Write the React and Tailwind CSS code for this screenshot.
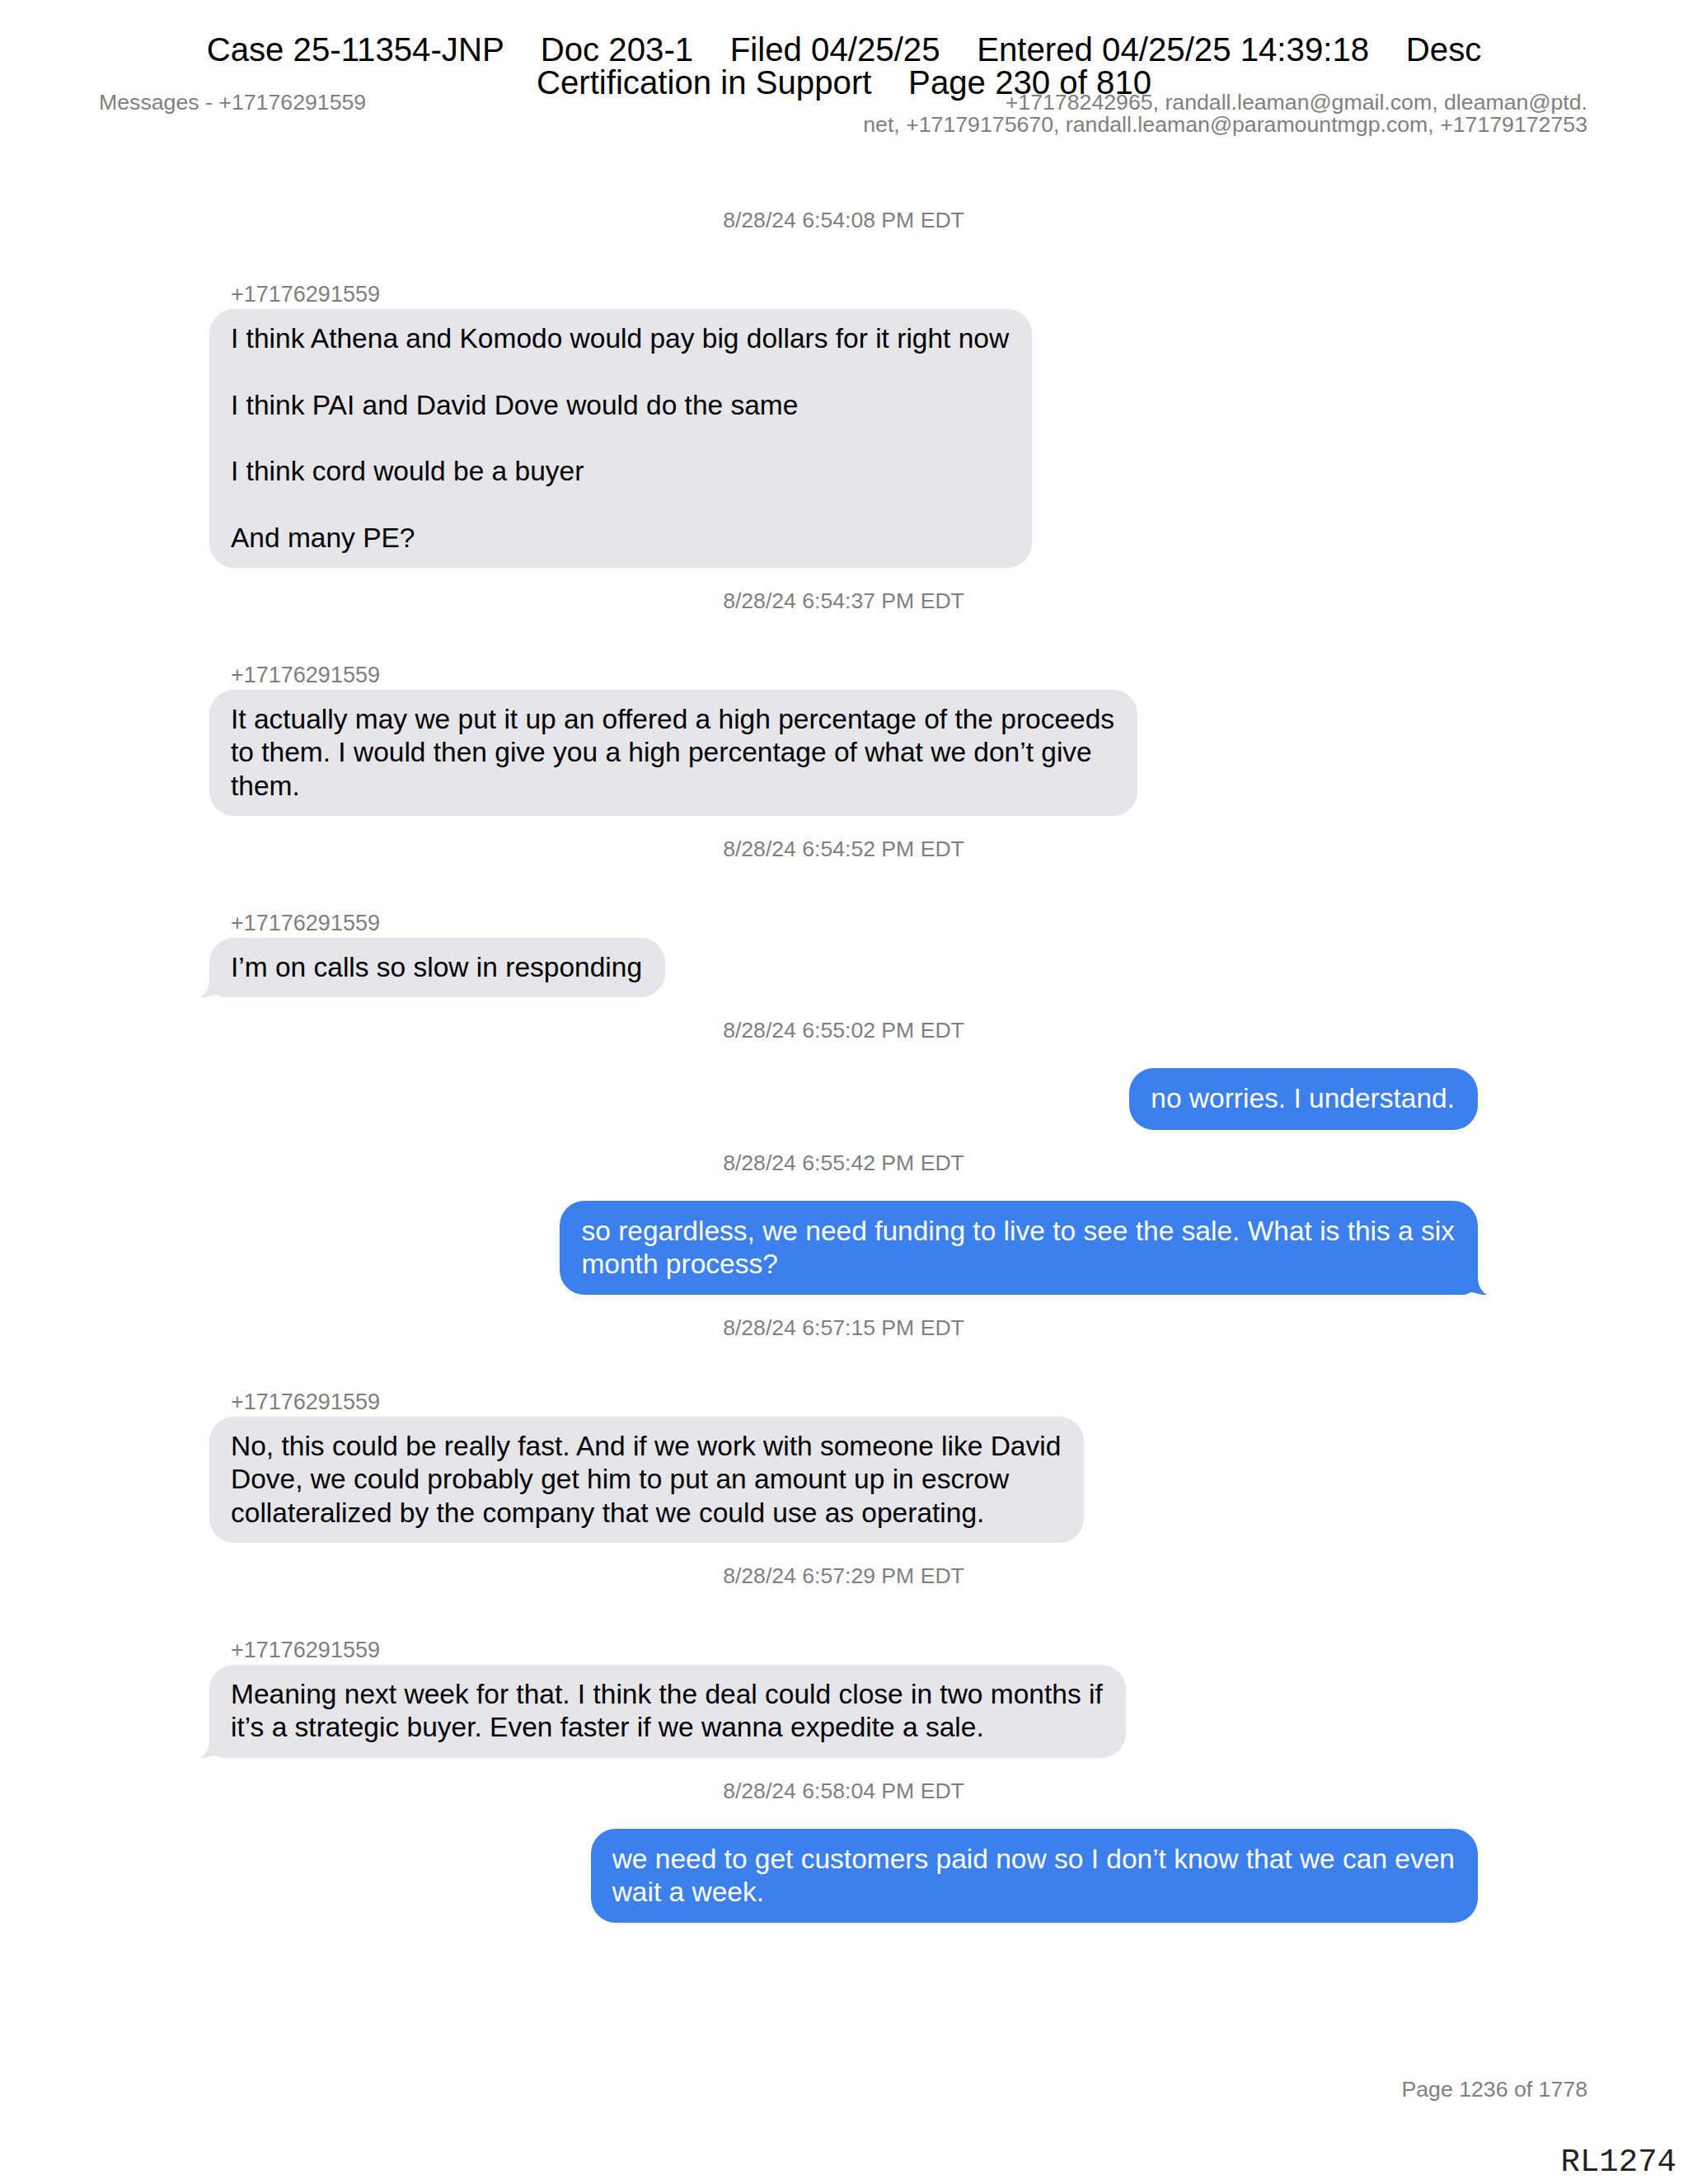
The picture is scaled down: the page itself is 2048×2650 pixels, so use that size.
import React from "react";

const GRAY = "#e5e5ea";
const BLUE = "#3b80ec";

function Timestamp({ children, mt }) {
  return (
    <div className={`text-center text-[26.6px] leading-[28px] text-[#7f7f7f] ${mt}`}>
      {children}
    </div>
  );
}

function TailLeft() {
  return (
    <svg
      className="absolute left-[-11px] bottom-0 w-[40px] h-[30px]"
      viewBox="0 0 40 30"
      aria-hidden="true"
    >
      <path
        d="M11 0 L40 0 L40 30 L28 30 C24 30 21 27 18 27 C14 27 8 31 0 30 C6 26 11 20 11 8 Z"
        fill={GRAY}
      />
    </svg>
  );
}

function TailRight() {
  return (
    <svg
      className="absolute right-[-11px] bottom-0 w-[40px] h-[30px]"
      viewBox="0 0 40 30"
      aria-hidden="true"
    >
      <path
        d="M29 0 L0 0 L0 30 L12 30 C16 30 19 27 22 27 C26 27 32 31 40 30 C34 26 29 20 29 8 Z"
        fill={BLUE}
      />
    </svg>
  );
}

function Incoming({ lines, tail }) {
  return (
    <div className="mt-[61px]">
      <div className="pl-[26px] text-[27px] leading-[30px] text-[#7f7f7f]">+17176291559</div>
      <div className="mt-[3px] flex">
        <div className="relative rounded-[30px] bg-[#e5e5ea] pl-[26px] pr-[28px] pt-[16px] pb-[16px] text-[33.5px] leading-[40.3px] text-black whitespace-pre">
          {tail && <TailLeft />}
          <span className="relative">{lines.join("\n")}</span>
        </div>
      </div>
    </div>
  );
}

function Outgoing({ lines, tail }) {
  return (
    <div className="mt-[32px] flex justify-end">
      <div className="relative rounded-[30px] bg-[#3b80ec] pl-[26px] pr-[28px] pt-[17px] pb-[17px] text-[33.5px] leading-[40.3px] text-white whitespace-pre">
        {tail && <TailRight />}
        <span className="relative">{lines.join("\n")}</span>
      </div>
    </div>
  );
}

export default function App() {
  return (
    <div
      className="relative w-[2048px] min-h-[2650px] bg-white overflow-hidden"
      style={{ fontFamily: '"Liberation Sans", Arial, sans-serif' }}
    >
      {/* Court filing stamp overlay */}
      <div className="absolute left-0 right-0 top-[41px] text-center text-[40.2px] leading-[40px] text-black whitespace-pre">
        <div>{"Case 25-11354-JNP    Doc 203-1    Filed 04/25/25    Entered 04/25/25 14:39:18    Desc"}</div>
        <div>{"Certification in Support    Page 230 of 810"}</div>
      </div>

      <div className="pt-[111px]">
        {/* Page header */}
        <div className="flex justify-between pl-[120px] pr-[122px] text-[26.7px] leading-[27px] text-[#808080]">
          <div>Messages - +17176291559</div>
          <div className="text-right">
            <div>+17178242965, randall.leaman@gmail.com, dleaman@ptd.</div>
            <div>net, +17179175670, randall.leaman@paramountmgp.com, +17179172753</div>
          </div>
        </div>

        {/* Conversation */}
        <div className="pl-[254px] pr-[255px]">
          <Timestamp mt="mt-[88px]">8/28/24 6:54:08 PM EDT</Timestamp>
          <Incoming
            lines={[
              "I think Athena and Komodo would pay big dollars for it right now",
              "",
              "I think PAI and David Dove would do the same",
              "",
              "I think cord would be a buyer",
              "",
              "And many PE?",
            ]}
          />
          <Timestamp mt="mt-[26px]">8/28/24 6:54:37 PM EDT</Timestamp>
          <Incoming
            lines={[
              "It actually may we put it up an offered a high percentage of the proceeds",
              "to them. I would then give you a high percentage of what we don\u2019t give",
              "them.",
            ]}
          />
          <Timestamp mt="mt-[26px]">8/28/24 6:54:52 PM EDT</Timestamp>
          <Incoming lines={["I\u2019m on calls so slow in responding"]} tail />
          <Timestamp mt="mt-[26px]">8/28/24 6:55:02 PM EDT</Timestamp>
          <Outgoing lines={["no worries. I understand."]} />
          <Timestamp mt="mt-[26px]">8/28/24 6:55:42 PM EDT</Timestamp>
          <Outgoing
            lines={[
              "so regardless, we need funding to live to see the sale. What is this a six",
              "month process?",
            ]}
            tail
          />
          <Timestamp mt="mt-[26px]">8/28/24 6:57:15 PM EDT</Timestamp>
          <Incoming
            lines={[
              "No, this could be really fast. And if we work with someone like David",
              "Dove, we could probably get him to put an amount up in escrow",
              "collateralized by the company that we could use as operating.",
            ]}
          />
          <Timestamp mt="mt-[26px]">8/28/24 6:57:29 PM EDT</Timestamp>
          <Incoming
            lines={[
              "Meaning next week for that. I think the deal could close in two months if",
              "it\u2019s a strategic buyer. Even faster if we wanna expedite a sale.",
            ]}
            tail
          />
          <Timestamp mt="mt-[26px]">8/28/24 6:58:04 PM EDT</Timestamp>
          <Outgoing
            lines={[
              "we need to get customers paid now so I don\u2019t know that we can even",
              "wait a week.",
            ]}
          />
        </div>

        {/* Footer */}
        <div className="mt-[187px] pr-[122px] text-right text-[26.7px] leading-[30px] text-[#808080]">
          Page 1236 of 1778
        </div>
        <div
          className="mt-[52px] pr-[14px] text-right text-[39px] leading-[44px] text-[#222222]"
          style={{ fontFamily: '"Liberation Mono", "Courier New", monospace' }}
        >
          RL1274
        </div>
      </div>
    </div>
  );
}
